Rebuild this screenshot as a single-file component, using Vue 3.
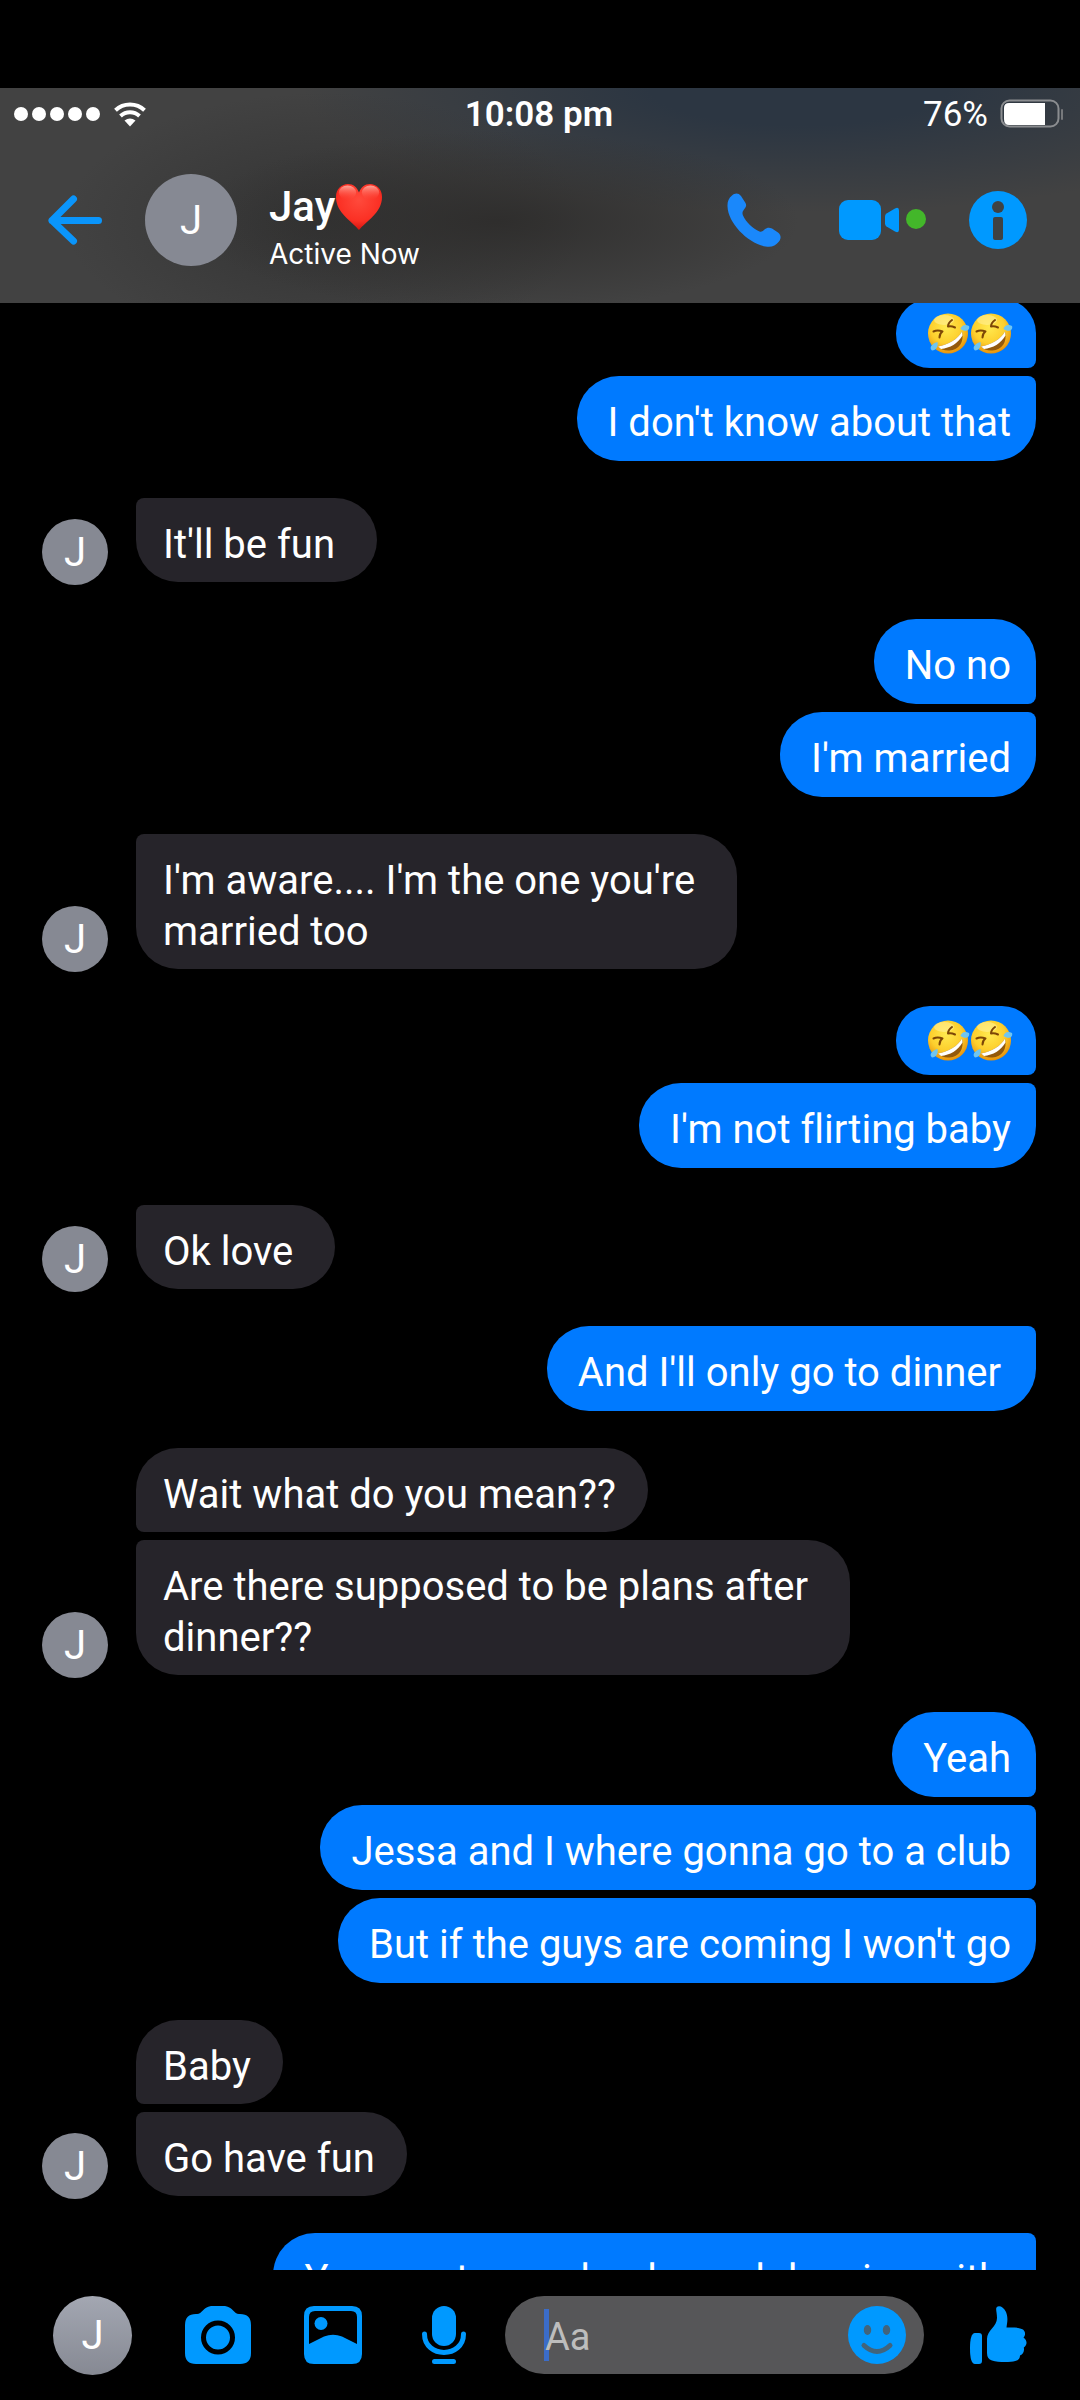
<script setup>
import { ref } from 'vue'

const draft = ref('')

const groups = [
  { from: 'me', items: [{ laugh: 2 }, { text: "I don't know about that" }] },
  { from: 'them', joinTop: true, items: [{ text: "It'll be fun " }] },
  { from: 'me', items: [{ text: 'No no' }, { text: "I'm married" }] },
  { from: 'them', joinTop: true, items: [{ text: "I'm aware.... I'm the one you're \nmarried too" }] },
  { from: 'me', items: [{ laugh: 2 }, { text: "I'm not flirting baby" }] },
  { from: 'them', joinTop: true, items: [{ text: 'Ok love ' }] },
  { from: 'me', joinTop: true, items: [{ text: "And I'll only go to dinner " }] },
  { from: 'them', items: [{ text: 'Wait what do you mean??' }, { text: 'Are there supposed to be plans after \ndinner??' }] },
  { from: 'me', items: [{ text: 'Yeah' }, { text: 'Jessa and I where gonna go to a club' }, { text: "But if the guys are coming I won't go" }] },
  { from: 'them', items: [{ text: 'Baby' }, { text: 'Go have fun' }] },
  { from: 'me', joinTop: true, items: [{ text: 'You want men drunks and dancing with ' }] },
]

function corners(group, i) {
  return {
    'join-top': i > 0 || group.joinTop,
    'join-bottom': i < group.items.length - 1,
    laugh: !!group.items[i].laugh,
  }
}
</script>

<template>
  <div class="app">
    <header class="top">
      <div class="status">
        <div class="signal">
          <span v-for="n in 5" :key="n" class="dot"></span>
          <svg class="wifi" width="32" height="25" viewBox="0 0 32 25" fill="none" stroke="#fff" stroke-width="4">
            <path d="M1.500 8.200C9.500 .6 22.500 .6 30.500 8.200" />
            <path d="M6.500 14C12 9 20 9 25.500 14" />
            <path d="M10.500 18.500Q16 14.500 21.500 18.500L16 24.500Z" fill="#fff" stroke="none" />
          </svg>
        </div>
        <span class="time">10:08 pm</span>
        <div class="power">
          <span>76%</span>
          <svg width="64" height="30" viewBox="0 0 64 30">
            <rect x="1.500" y="1.500" width="57" height="26" rx="8" fill="none" stroke="#8b8d90" stroke-width="2" />
            <path d="M45 4H9Q4 4 4 9V20Q4 26 9 26H45Z" fill="#fff" />
            <rect x="61" y="10" width="2" height="11" rx="1" fill="#77797c" />
          </svg>
        </div>
      </div>
      <div class="bar">
        <button class="icon back" aria-label="Back">
          <svg width="54" height="50" viewBox="0 0 54 50" fill="none" stroke="#0a95fb" stroke-width="7" stroke-linecap="round" stroke-linejoin="round">
            <path d="M25.500 4L4 25.500 25.500 46M4 25.500H50.500" />
          </svg>
        </button>
        <span class="avatar large">J</span>
        <div class="who">
          <h1>
            Jay<svg role="img" aria-label="❤️" width="48" height="50" viewBox="0 0 50 50">
              <defs>
                <radialGradient id="heart" cx=".5" cy=".35" r=".65">
                  <stop offset="0" stop-color="#ff4a3c" />
                  <stop offset=".7" stop-color="#fb3024" />
                  <stop offset="1" stop-color="#d31410" />
                </radialGradient>
                <linearGradient id="gloss" x1="0" y1="0" x2="0" y2="1">
                  <stop offset="0" stop-color="#ffb4a8" stop-opacity=".9" />
                  <stop offset="1" stop-color="#ff4a3c" stop-opacity="0" />
                </linearGradient>
              </defs>
              <path d="M25 49C18 40 1 31 1 14.500C1 6 7 1 13.500 1C19 1 23 4.500 25 10C27 4.500 31 1 36.500 1C43 1 49 6 49 14.500C49 31 32 40 25 49Z" fill="url(#heart)" />
              <ellipse cx="13" cy="10" rx="9" ry="7.500" fill="url(#gloss)" />
              <ellipse cx="37" cy="10" rx="9" ry="7.500" fill="url(#gloss)" />
            </svg>
          </h1>
          <p>Active Now</p>
        </div>
        <nav class="calls">
          <button class="icon" aria-label="Call">
            <svg width="54" height="54" viewBox="0 0 54 54">
              <path d="M5 2.500C8 -.2 11.500 -.2 14 3L18.500 10C19.800 12.500 19 14 17 16.500C15.500 18.500 15 20 16 22.500C19 29 26 36 32.500 38.500C34.500 39 35.500 38.500 37.500 36.500C40 34.500 42 34 45 35.500L51 39.500C54 42 54.500 45 52 48.500C48.500 53 44.500 54.500 38.500 53.500C21 50.500 1 30 .5 13.500C.3 8.500 1.500 5.500 5 2.500Z" fill="#1a88fb" />
            </svg>
          </button>
          <button class="icon video" aria-label="Video call">
            <svg width="88" height="42" viewBox="0 0 88 42">
              <rect y="1" width="42" height="40" rx="9" fill="#0099ff" />
              <path d="M47.500 14.500L56 9.500Q60 7.500 60 11.500V30.500Q60 34.500 56 32.500L47.500 27.500Q46 26.500 46 24.500V17.500Q46 15.500 47.500 14.500Z" fill="#0099ff" />
              <circle cx="77" cy="20" r="10" fill="#43b72a" />
            </svg>
          </button>
          <button class="icon" aria-label="Conversation info">
            <svg width="58" height="58" viewBox="0 0 58 58">
              <circle cx="29" cy="29" r="29" fill="#0099ff" />
              <circle cx="29" cy="16" r="6" fill="#3f4244" />
              <rect x="24" y="26" width="10" height="23" rx="2" fill="#3f4244" />
            </svg>
          </button>
        </nav>
      </div>
    </header>

    <main class="chat">
      <svg width="0" height="0" class="defs" aria-hidden="true">
        <defs>
          <radialGradient id="face" cx=".45" cy=".35" r=".65">
            <stop offset="0" stop-color="#ffe94f" />
            <stop offset=".6" stop-color="#fdcf2d" />
            <stop offset="1" stop-color="#e8930c" />
          </radialGradient>
          <symbol id="rofl" viewBox="0 0 43 43">
            <circle cx="20" cy="21.500" r="20" fill="url(#face)" />
            <ellipse cx="16" cy="8" rx="10" ry="5" fill="#fff3a0" opacity=".55" />
            <path d="M10 34.500C20 33 30 27 34 19.500C36.500 30 31 38 21.500 38.500C16.500 38.800 12.500 37.500 10 34.500Z" fill="#93590c" />
            <path d="M10 34.500C20 33 30 27 34 19.500L34.500 23.500C30 31.500 22 36 13 37Z" fill="#fff" />
            <path d="M5.500 19.500Q9.500 17.500 14.500 19.500Q11.500 21.500 11.500 25.500M24 8Q20 11 20 14.500Q23 13.500 27 15.500" fill="none" stroke="#7d4606" stroke-width="2" stroke-linecap="round" stroke-linejoin="round" />
            <path d="M32.500 17C33 13.500 37 11.500 41 14C42.500 18.500 37 20.500 32.500 17Z" fill="#6fc5f1" />
            <path d="M9.500 30C10.500 34.500 8 38.500 4 38.500C1 36 3 32 9.500 30Z" fill="#6fc5f1" />
          </symbol>
        </defs>
      </svg>
      <ol class="thread">
        <li v-for="(group, g) in groups" :key="g" class="group" :class="group.from">
          <span v-if="group.from === 'them'" class="avatar small">J</span>
          <div class="stack">
            <p v-for="(m, i) in group.items" :key="i" class="bubble" :class="corners(group, i)">
              <template v-if="m.laugh">
                <svg v-for="n in m.laugh" :key="n" role="img" aria-label="🤣" width="43" height="43"><use href="#rofl" /></svg>
              </template>
              <template v-else>{{ m.text }}</template>
            </p>
          </div>
        </li>
      </ol>
    </main>

    <footer class="composer">
      <span class="avatar medium">J</span>
      <div class="tools">
        <button class="icon" aria-label="Camera">
          <svg width="66" height="58" viewBox="0 0 66 58">
            <path d="M11 8H12C17 8 18 1 26 0H40C48 1 49 8 54 8H55Q66 8 66 19V47Q66 58 55 58H11Q0 58 0 47V19Q0 8 11 8Z" fill="#0099ff" />
            <circle cx="33" cy="31.500" r="14.500" fill="#0099ff" stroke="#000" stroke-width="5" />
          </svg>
        </button>
        <button class="icon" aria-label="Photos">
          <svg width="58" height="58" viewBox="0 0 58 58">
            <path fill-rule="evenodd" d="M10 0H48Q58 0 58 10V48Q58 58 48 58H10Q0 58 0 48V10Q0 0 10 0ZM11 5Q5 5 5 11V38L20 30.500Q29 27 38 30.500L53 38V11Q53 5 47 5Z" fill="#0099ff" />
            <circle cx="17" cy="17.500" r="6.500" fill="#0099ff" />
          </svg>
        </button>
        <button class="icon" aria-label="Voice message">
          <svg width="58" height="58" viewBox="-7 0 58 58" fill="none" stroke="#0099ff" stroke-width="5" stroke-linecap="round">
            <rect x="10" y="0" width="24" height="40" rx="12" fill="#0099ff" stroke="none" />
            <path d="M2.500 28C2.500 52.500 41.500 52.500 41.500 28M12.500 55.500H31.500" />
          </svg>
        </button>
      </div>
      <label class="field">
        <span class="caret"></span>
        <input v-model="draft" type="text" placeholder="Aa" aria-label="Message" />
        <button class="icon" type="button" aria-label="Emoji">
          <svg width="58" height="58" viewBox="0 0 58 58">
            <circle cx="29" cy="29" r="29" fill="#0099ff" />
            <ellipse cx="19.500" cy="24" rx="3.700" ry="5" fill="#42647c" />
            <ellipse cx="38.500" cy="24" rx="3.700" ry="5" fill="#42647c" />
            <path d="M16 39.500Q29 51.500 42 39.500" fill="none" stroke="#42647c" stroke-width="5" stroke-linecap="round" />
          </svg>
        </button>
      </label>
      <button class="icon" aria-label="Send a like">
        <svg width="57" height="58" viewBox="0 0 57 58" fill="#0099ff">
          <path d="M5 27H9Q12 27 12 30V55Q12 58 9 58H5Q0 58 0 42.500Q0 27 5 27Z" />
          <path d="M17 33C17 24 27 21 27 12C27 7 25.500 3 26.500 1.500C28.500 -1 33.500 .5 36 6C38.500 12 37 17 36.500 21.500C44 21.300 50 21.500 53 23.500C55.500 25.500 55.800 29 53.500 31.500C57.500 34.500 57.500 39 53.800 41.500C54.500 45 53.500 48 50 49.500C50 53 47.500 55.500 41 55.800C34 56.200 27 56 22 54.500Q17 53 17 47Z" />
        </svg>
      </button>
    </footer>
  </div>
</template>

<style>
body {
  margin: 0;
  background: #000;
}
</style>

<style scoped>
.app {
  display: flex;
  flex-direction: column;
  box-sizing: border-box;
  height: 100vh;
  padding-top: 88px;
  background: #000;
  color: #fff;
  font-family: Roboto, "Liberation Sans", sans-serif;
  font-variant-ligatures: none;
}
h1, p, ol {
  margin: 0;
  padding: 0;
}
svg {
  display: block;
  flex: none;
}
.icon {
  display: block;
  flex: none;
  padding: 0;
  border: 0;
  background: none;
}
.top {
  flex: none;
  height: 215px;
  background:
    radial-gradient(ellipse 28% 42% at 46% 62%, rgba(46, 45, 44, 0.95), rgba(46, 45, 44, 0) 100%),
    radial-gradient(ellipse 24% 60% at 30% 62%, rgba(48, 48, 48, 0.8), rgba(48, 48, 48, 0) 100%),
    radial-gradient(ellipse 46% 58% at 74% 0%, #2c3642 30%, rgba(52, 58, 66, 0) 100%),
    #424242;
}
.status {
  display: grid;
  grid-template-columns: 1fr auto 1fr;
  align-items: center;
  height: 52px;
  padding: 0 16px 0 14px;
  font-size: 35px;
}
.signal {
  display: flex;
  align-items: center;
  gap: 4px;
}
.dot {
  width: 14px;
  height: 14px;
  border-radius: 50%;
  background: #fff;
}
.wifi {
  margin-left: 10px;
}
.time {
  font-weight: 600;
}
.power {
  display: flex;
  align-items: center;
  justify-content: flex-end;
  gap: 12px;
}
.bar {
  display: flex;
  align-items: center;
  height: 160px;
  padding: 0 53px 0 48px;
}
.avatar {
  display: flex;
  flex: none;
  align-items: center;
  justify-content: center;
  border-radius: 50%;
  background: #868993;
  font-size: 40px;
}
.large {
  width: 92px;
  height: 92px;
  margin: 0 32px 0 43px;
}
.small {
  width: 66px;
  height: 66px;
  margin: 0 28px -3px 0;
}
.medium {
  width: 79px;
  height: 79px;
  background: linear-gradient(#a3a7b2, #868993);
}
.who {
  flex: 1;
  padding-top: 14px;
}
h1 {
  display: flex;
  align-items: center;
  font-size: 42px;
  font-weight: 500;
  line-height: 50px;
}
.who p {
  font-family: Inter, "Liberation Sans", sans-serif;
  font-size: 28px;
  line-height: 36px;
  margin-top: 4px;
}
.calls {
  display: flex;
  align-items: center;
}
.video {
  margin: 0 42px 0 58px;
}
.chat {
  flex: 1;
  min-height: 0;
  overflow: hidden;
}
.defs {
  position: absolute;
}
.thread {
  display: flex;
  flex-direction: column;
  gap: 37px;
  margin-top: -4px;
  padding: 0 44px 0 42px;
  list-style: none;
}
.group {
  display: flex;
  align-items: flex-end;
}
.me {
  justify-content: flex-end;
}
.stack {
  display: flex;
  flex-direction: column;
  align-items: flex-start;
  gap: 8px;
}
.me .stack {
  align-items: flex-end;
}
.bubble {
  padding: 21px 32px 12px 27px;
  border-radius: 42px;
  background: #26242a;
  font-size: 40px;
  line-height: 51px;
  white-space: pre;
}
.me .bubble {
  padding: 21px 25px 13px 31px;
  background: #007aff;
}
.me .laugh {
  display: flex;
  padding: 13px 22px 13px 32px;
  border-radius: 34px;
}
.me .join-top {
  border-top-right-radius: 8px;
}
.me .join-bottom {
  border-bottom-right-radius: 8px;
}
.them .join-top {
  border-top-left-radius: 8px;
}
.them .join-bottom {
  border-bottom-left-radius: 8px;
}
.composer {
  display: flex;
  flex: none;
  align-items: center;
  height: 130px;
  padding: 0 53px;
  box-sizing: border-box;
}
.tools {
  display: flex;
  align-items: center;
  gap: 53px;
  margin: 0 32px 0 53px;
}
.field {
  position: relative;
  display: flex;
  flex: 1;
  align-items: center;
  min-width: 0;
  height: 78px;
  margin-right: 46px;
  padding: 0 18px 0 40px;
  box-sizing: border-box;
  border-radius: 39px;
  background: #565658;
}
.caret {
  position: absolute;
  left: 39px;
  width: 5px;
  height: 52px;
  background: #3b6cc8;
}
.field input {
  position: relative;
  flex: 1;
  min-width: 0;
  padding: 4px 0 0;
  border: 0;
  outline: 0;
  background: none;
  color: #fff;
  font: inherit;
  font-size: 38px;
}
.field input::placeholder {
  color: #bdbdbd;
  opacity: 1;
}
</style>
